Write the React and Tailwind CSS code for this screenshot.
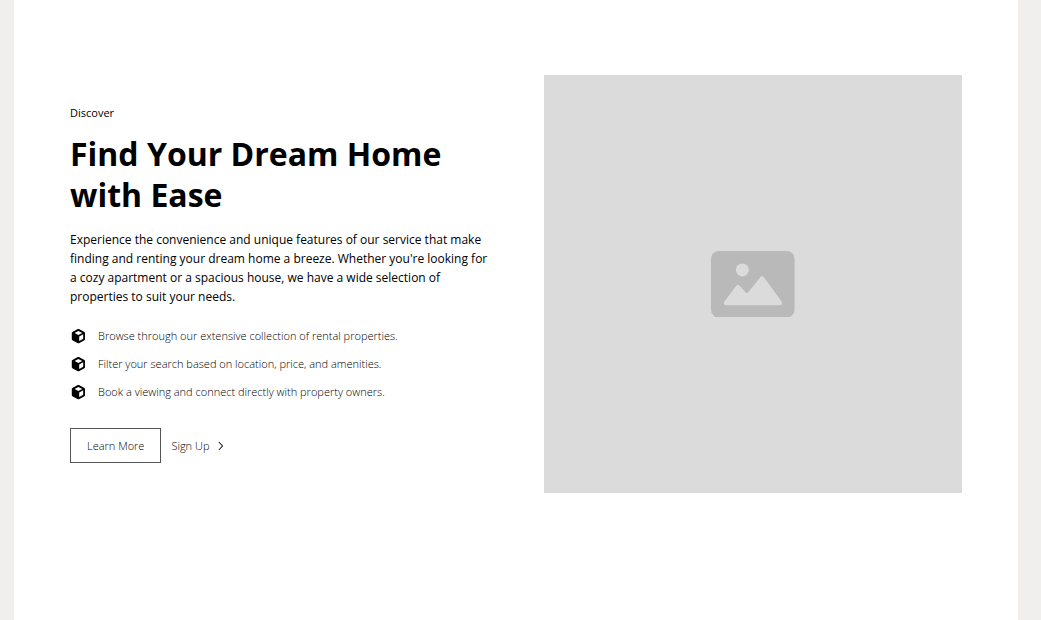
import React from "react";
import { RxChevronRight } from "react-icons/rx";

const features = [
  "Browse through our extensive collection of rental properties.",
  "Filter your search based on location, price, and amenities.",
  "Book a viewing and connect directly with property owners.",
];

function CubeIcon() {
  return (
    <svg viewBox="0 0 16 16" className="size-4 shrink-0" aria-hidden="true">
      <path
        d="M7.8 1.1Q8.4 0.8 9 1.1L14.4 4Q15 4.3 15 5V11.3Q15 11.9 14.4 12.2L9 15.2Q8.4 15.5 7.8 15.2L2.4 12.2Q1.8 11.9 1.8 11.3V5Q1.8 4.3 2.4 4Z"
        fill="currentColor"
      />
      <path d="M9.2 8.5 13.2 6.3V10.7L9.2 12.9Z" fill="white" />
      <path d="M4.6 5 8.4 3 12.2 5 8.4 7Z" fill="white" />
    </svg>
  );
}

function PlaceholderImage() {
  return (
    <div
      role="img"
      aria-label="Placeholder image"
      className="flex aspect-square w-full items-center justify-center bg-[#dbdbdb]"
    >
      <svg viewBox="0 0 84 67" className="w-1/5" aria-hidden="true">
        <rect width="84" height="67" rx="8" fill="#b9b9b9" />
        <circle cx="31.5" cy="19" r="6.5" fill="#dbdbdb" />
        <path
          d="M13.4 50.9 25.2 35.1Q27 33 28.8 35L34.4 41.3Q36 43.2 37.6 41.2L49.3 26.6Q51.3 24.2 53.3 26.7L70.6 50.2Q72.6 54.5 69 54.5H15Q11.6 54.3 13.4 50.9Z"
          fill="#dbdbdb"
        />
      </svg>
    </div>
  );
}

export default function App() {
  return (
    <div className="min-h-screen bg-[#f0efed] pr-[23px] pl-3.5 font-['Open_Sans','Noto_Sans',sans-serif] text-black">
      <main className="min-h-screen bg-white px-14 py-[75px]">
        <section className="grid grid-cols-2 items-center gap-14">
          <div>
            <p className="mb-3 text-[11px] leading-4">Discover</p>
            <h1 className="mb-[15px] text-[32px] leading-[41px] font-bold">
              Find Your Dream Home with Ease
            </h1>
            <p className="mb-[22px] text-[12px] leading-[19px]">
              Experience the convenience and unique features of our service that
              make finding and renting your dream home a breeze. Whether you're
              looking for a cozy apartment or a spacious house, we have a wide
              selection of properties to suit your needs.
            </p>
            <ul className="grid gap-3">
              {features.map((feature) => (
                <li key={feature} className="flex items-center gap-3">
                  <CubeIcon />
                  <span className="text-[11px] leading-4 font-[350]">
                    {feature}
                  </span>
                </li>
              ))}
            </ul>
            <div className="mt-7 flex items-center gap-2.5 text-[11px] leading-[17px] font-[350]">
              <button
                type="button"
                className="border border-[#555555] px-4 py-2"
              >
                Learn More
              </button>
              <button type="button" className="flex items-center gap-1">
                Sign Up
                <RxChevronRight className="size-3.5" aria-hidden="true" />
              </button>
            </div>
          </div>
          <PlaceholderImage />
        </section>
      </main>
    </div>
  );
}
